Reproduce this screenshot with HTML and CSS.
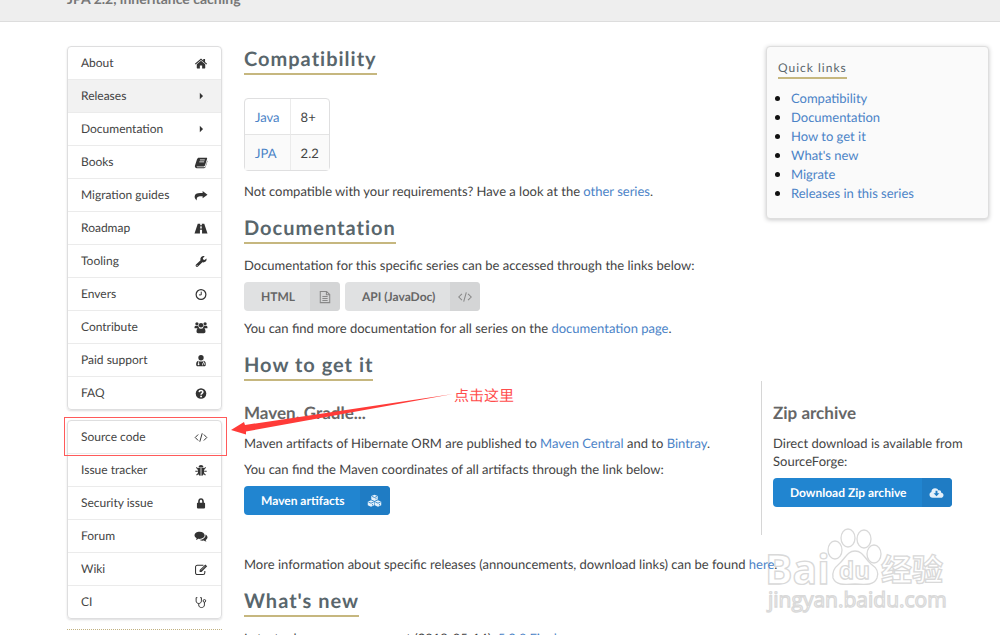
FILE: index.html
```
<!DOCTYPE html>
<html lang="en">
<head>
  <meta charset="UTF-8">
  <meta name="viewport" content="width=device-width, initial-scale=1.0">
  <title>Hibernate ORM 5.3 series</title>
  <link rel="stylesheet" href="styles.css">
</head>
<body>
  <svg class="sprite" aria-hidden="true">
    <symbol id="i-home" viewBox="0 0 16 16"><path d="M8 4.6 13.2 9v4.5a.6.6 0 0 1-.6.5H9.4v-3.6H6.6V14H3.4a.6.6 0 0 1-.6-.5V9zM8 1.8l2.8 2.4V2.6h2.2V6L15.5 8.200l-.9 1L8 3.700 1.400 9.200l-.9-1z"/></symbol>
    <symbol id="i-caret" viewBox="0 0 16 16"><path d="M6.500 3.500v8l4-4z"/></symbol>
    <symbol id="i-book" viewBox="0 0 16 16"><path d="M5.500 2h9c.9 0 1.300.6 1 1.400l-2.600 8.400c-.2.7-.7 1-1.400 1H3.600c-1 0-1.400.8-.2 1h8.900c.6 0 1-.3 1.200-.9l2.300-7.300c.3.400.2.800.1 1.200l-2.200 6.800c-.3.900-1 1.400-1.900 1.400H3C1 15 0 13.300.6 11.700L3.100 4C3.500 2.800 4.200 2 5.500 2z"/><path d="m6.700 4.800h6M5.900 7.200h6" stroke="#fff" fill="none"/></symbol>
    <symbol id="i-share" viewBox="0 0 16 16"><path d="M10 2.500 16 7l-6 4.500V9H7.500C4.500 9 2.600 10 2.700 14 .6 12.500 0 10.800.2 9 .5 6.200 3 5 7 5h3z"/></symbol>
    <symbol id="i-road" viewBox="0 0 16 16"><path d="M4 2h3v2h2V2h3l4 12H9.300V9.500H6.700V14H0zM7.200 5.200 7 8h2l-.2-2.800z" fill-rule="evenodd"/></symbol>
    <symbol id="i-wrench" viewBox="0 0 16 16"><path d="M14.700 4.200c.4 1.400 0 2.900-1.100 3.900-1.100 1-2.500 1.200-3.900.8l-5.400 5.300c-.7.700-1.700.7-2.400 0s-.7-1.700 0-2.400l5.500-5.400C7 5 7.300 3.600 8.300 2.600 9.400 1.400 11 1.100 12.500 1.600L10.200 3.900l.5 1.700 1.700.5zM3.100 12.300a.6.6 0 1 0 .1 1.200.6.6 0 0 0-.1-1.200z" fill-rule="evenodd"/></symbol>
    <symbol id="i-clock" viewBox="0 0 16 16"><circle cx="8" cy="8" r="6" fill="none" stroke="currentColor" stroke-width="1.500"/><path d="M8.300 4.500v4H5.500" fill="none" stroke="currentColor" stroke-width="1.200"/></symbol>
    <symbol id="i-users" viewBox="0 0 16 16"><circle cx="3" cy="3.400" r="2"/><circle cx="13" cy="3.400" r="2"/><circle cx="8" cy="5.200" r="2.800"/><path d="M0 8.500C0 6.500.6 5.700 1.500 5.800L3 6.300l1.500-.4C4.800 7 5.200 7.700 5.700 8.200L4.200 9H1C.3 9 0 8.800 0 8.500zM16 8.500c0-2-.6-2.800-1.500-2.700l-1.500.5-1.500-.4c-.3 1.100-.7 1.800-1.200 2.300l1.500.8H15c.7 0 1-.2 1-.5zM5.200 8.700C3.500 8.700 2.500 10 2.500 13c0 1.300.8 2 2 2h7c1.200 0 2-.7 2-2 0-3-1-4.300-2.700-4.300-1.700 1.100-3.900 1.100-5.600 0z"/></symbol>
    <symbol id="i-doctor" viewBox="0 0 16 16"><circle cx="8" cy="4.600" r="3.300"/><path d="M4.600 8.200C3 8.600 2 10 2 12.800 2 14 2.800 15 4 15h8c1.200 0 2-1 2-2.200 0-2.800-1-4.200-2.600-4.600-2 1.500-4.800 1.500-6.800 0z"/><path d="M5 9v3m5 2v-2c0-1.500 2.600-1.500 2.600 0v1.500M11.200 9v2" fill="none" stroke="#fff" stroke-width="1"/><circle cx="5" cy="12.600" r="1.100" fill="#fff"/></symbol>
    <symbol id="i-help" viewBox="0 0 16 16"><circle cx="8" cy="8" r="6.500"/><path d="M5.700 6.300C5.800 3.700 10.300 3.600 10.300 6.200c0 1.700-2.200 1.700-2.200 3.400" fill="none" stroke="#fff" stroke-width="1.900"/><path d="M7 10.800h2.200v1.900H7z" fill="#fff"/></symbol>
    <symbol id="i-code" viewBox="0 0 16 16"><path d="M4.500 4.300.9 8l3.600 3.700M11.500 4.300 15.100 8l-3.600 3.700M9.500 2.800l-3 10.400" fill="none" stroke="currentColor" stroke-width="1.200"/></symbol>
    <symbol id="i-bug" viewBox="0 0 16 16"><path d="M5 4.300C5 .4 11 .4 11 4.300zM4.200 5h3.300v9.500C5 14.200 4.200 12 4.200 10zM8.500 5h3.300v5c0 2-.8 4.200-3.300 4.500z"/><path d="M4.500 6.500 2.300 4.300M4 9H1M4.700 11.500l-2.200 2.300M11.500 6.500l2.200-2.200M12 9h3M11.300 11.500l2.200 2.300" fill="none" stroke="currentColor" stroke-width="1.300"/></symbol>
    <symbol id="i-lock" viewBox="0 0 16 16"><path d="M4.500 7V5.500C4.500 3 6 1.500 8 1.500S11.500 3 11.500 5.500V7h.6c.5 0 .9.4.9.900V13c0 .6-.4 1-.9 1H3.900c-.5 0-.9-.4-.9-1V7.900c0-.5.4-.9.9-.9zm2 0h3V5.500c0-1.300-.6-2-1.500-2s-1.500.7-1.500 2z" fill-rule="evenodd"/></symbol>
    <symbol id="i-chat" viewBox="0 0 16 16"><path d="M6.300 2C9.800 2 12.500 4 12.500 6.500S9.800 11 6.300 11c-.5 0-1 0-1.500-.1-1 .8-2 1.200-3.300 1.300.7-.7 1-1.300 1.100-2.200C1 9.200 0 8 0 6.500 0 4 2.800 2 6.300 2z"/><path d="M13.500 5.500C15 6.300 16 7.500 16 9c0 1.300-.9 2.500-2.300 3.300.1.800.5 1.400 1.100 2-1.300-.1-2.400-.5-3.300-1.300-2 .3-4 0-5.400-1 4.400 0 7.900-2.500 7.400-6.500z"/></symbol>
    <symbol id="i-edit" viewBox="0 0 16 16"><path d="M11 2.700H3.500A2.200 2.200 0 0 0 1.300 5v7a2.200 2.200 0 0 0 2.200 2.200h7A2.200 2.200 0 0 0 12.700 12V9.700" fill="none" stroke="currentColor" stroke-width="1.300"/><path d="m13.300 1.700 2.300 2.300-7 7H6.300V8.700z"/><path d="m8 9 5-5" stroke="#fff" stroke-width=".6"/></symbol>
    <symbol id="i-steth" viewBox="0 0 16 16"><path d="M3.500 2H2v4c0 2 1.300 3.200 3.200 3.200S8.500 8 8.500 6V2H7M5.200 9.200V11c0 2 1.300 3.200 3.400 3.200S12.200 13 12.200 11V7.500" fill="none" stroke="currentColor" stroke-width="1.200"/><circle cx="12.200" cy="6" r="1.600" fill="none" stroke="currentColor" stroke-width="1.200"/></symbol>
    <symbol id="i-file" viewBox="0 0 16 16"><path d="M2.600 1.600h7.200l3.600 3.600v9.200H2.600zM9.600 1.600v3.800h3.800M5 7.500h6M5 9.700h6M5 11.900h6" fill="none" stroke="currentColor" stroke-width="1.200"/></symbol>
    <symbol id="i-cubes" viewBox="0 0 16 16"><path d="M8 .8 11.700 2.300v4L8 8 4.300 6.300v-4zM4 7.200 7.700 8.800v4L4 14.600.3 12.800v-4zM12 7.200l3.700 1.600v4L12 14.600l-3.700-1.800v-4z"/><path d="M5 2.700 8 4l3-1.300M9.700 6V4.500M1 9.200l3 1.300 3-1.300M9 9.200l3 1.300 3-1.300M5.700 13v-1.500M13.700 13v-1.500" fill="none" stroke="#1f7cc4" stroke-width=".9"/></symbol>
    <symbol id="i-cloud" viewBox="0 0 16 16"><path d="M3.700 13.500C1.600 13.500 0 12 0 10c0-1.500.8-2.700 2.200-3.200C2 4.300 4 2.500 6.300 2.500c1.900 0 3.300 1 4 2.600 1.700-.6 3.200.6 2.900 2.300C15 7.800 16 9 16 10.500c0 1.700-1.300 3-3 3zM6.900 5.500V8.200H4.700L8 11.600l3.300-3.400H9.100V5.500z" fill-rule="evenodd"/></symbol>
  </svg>

  <header class="banner">
    <p>JPA 2.2, inheritance caching</p>
  </header>

  <div class="page">
    <aside class="sidebar">
      <nav class="menu">
        <a href="#">About <svg><use href="#i-home"/></svg></a>
        <a href="#" class="active">Releases <svg><use href="#i-caret"/></svg></a>
        <a href="#">Documentation <svg><use href="#i-caret"/></svg></a>
        <a href="#">Books <svg><use href="#i-book"/></svg></a>
        <a href="#">Migration guides <svg><use href="#i-share"/></svg></a>
        <a href="#">Roadmap <svg><use href="#i-road"/></svg></a>
        <a href="#">Tooling <svg><use href="#i-wrench"/></svg></a>
        <a href="#">Envers <svg><use href="#i-clock"/></svg></a>
        <a href="#">Contribute <svg><use href="#i-users"/></svg></a>
        <a href="#">Paid support <svg><use href="#i-doctor"/></svg></a>
        <a href="#">FAQ <svg><use href="#i-help"/></svg></a>
      </nav>
      <nav class="menu">
        <a href="#" class="marked">Source code <svg><use href="#i-code"/></svg></a>
        <a href="#">Issue tracker <svg><use href="#i-bug"/></svg></a>
        <a href="#">Security issue <svg><use href="#i-lock"/></svg></a>
        <a href="#">Forum <svg><use href="#i-chat"/></svg></a>
        <a href="#">Wiki <svg><use href="#i-edit"/></svg></a>
        <a href="#">CI <svg><use href="#i-steth"/></svg></a>
      </nav>
      <hr>
    </aside>

    <main>
      <div class="intro">
        <div class="intro-text">
          <h2 id="compatibility">Compatibility</h2>
          <table class="compat">
            <tr><td><a href="#">Java</a></td><td>8+</td></tr>
            <tr><td><a href="#">JPA</a></td><td>2.2</td></tr>
          </table>
          <p>Not compatible with your requirements? Have a look at the <a href="#">other series</a>.</p>

          <h2 id="documentation">Documentation</h2>
          <p>Documentation for this specific series can be accessed through the links below:</p>
          <div class="buttons">
            <button type="button" class="btn"><span>HTML</span><i><svg><use href="#i-file"/></svg></i></button>
            <button type="button" class="btn"><span>API (JavaDoc)</span><i><svg><use href="#i-code"/></svg></i></button>
          </div>
          <p>You can find more documentation for all series on the <a href="#">documentation page</a>.</p>
        </div>

        <aside class="quick-links">
          <h4>Quick links</h4>
          <ul>
            <li><a href="#compatibility">Compatibility</a></li>
            <li><a href="#documentation">Documentation</a></li>
            <li><a href="#get-it">How to get it</a></li>
            <li><a href="#whats-new">What's new</a></li>
            <li><a href="#">Migrate</a></li>
            <li><a href="#">Releases in this series</a></li>
          </ul>
        </aside>
      </div>

      <h2 id="get-it">How to get it</h2>
      <div class="columns">
        <section>
          <h3>Maven, Gradle...</h3>
          <p>Maven artifacts of Hibernate ORM are published to <a href="#">Maven Central</a> and to <a href="#">Bintray</a>.</p>
          <p>You can find the Maven coordinates of all artifacts through the link below:</p>
          <button type="button" class="btn primary"><span>Maven artifacts</span><i><svg><use href="#i-cubes"/></svg></i></button>
        </section>
        <section>
          <h3>Zip archive</h3>
          <p>Direct download is available from SourceForge:</p>
          <button type="button" class="btn primary"><span>Download Zip archive</span><i><svg><use href="#i-cloud"/></svg></i></button>
        </section>
      </div>
      <p>More information about specific releases (announcements, download links) can be found <a href="#">here</a>.</p>

      <h2 id="whats-new">What's new</h2>
      <p>Latest release announcement (2018-05-14): <a href="#">5.3.0.Final</a>.</p>
    </main>
  </div>

  <!-- click hint drawn over the page -->
  <svg class="arrow" viewBox="0 0 224 44" aria-hidden="true">
    <path d="M1 38 14 30l1 3L223 2 16 39.500l0 3z" fill="#ff3b38"/>
  </svg>
  <div class="hint" lang="zh">点击这里</div>

  <svg class="watermark" viewBox="0 0 190 95" role="img" aria-label="Baidu">
    <g fill="#fff" stroke="#d9d9d9" stroke-width="1.300">
      <text class="wm-logo" x="5" y="64">Bai</text>
      <ellipse cx="75" cy="30" rx="7" ry="9"/>
      <ellipse cx="88" cy="18" rx="7" ry="9"/>
      <ellipse cx="104" cy="19" rx="7" ry="9"/>
      <ellipse cx="114" cy="34" rx="7" ry="9"/>
      <path d="M95 31c8 0 10 8 16 13 6 4 8 9 6 14-3 7-10 7-22 6-12 1-19 1-22-6-1-5 1-10 6-14 6-5 8-13 16-13z"/>
      <text class="wm-du" x="79" y="59">du</text>
      <text class="wm-cn" x="121" y="61">经验</text>
      <text class="wm-url" x="8" y="87">jingyan.baidu.com</text>
    </g>
  </svg>
</body>
</html>
```

FILE: styles.css
```
* { margin: 0; padding: 0; box-sizing: border-box; }
body {
  position: relative;
  font-family: Lato, "Noto Sans CJK SC", sans-serif;
  font-size: 13px;
  line-height: 18px;
  text-rendering: geometricPrecision;
  color: #444;
  background: #fff;
  overflow-x: hidden;
}
a { color: #4b83c7; text-decoration: none; }
.sprite { display: none; }

.banner {
  display: flex;
  align-items: flex-end;
  height: 22px;
  padding: 0 67px 13px;
  background: #eee;
  border-bottom: 1px solid #ddd;
  overflow: hidden;
  font-size: 14px;
  font-weight: bold;
  color: #777;
}

.page {
  display: grid;
  grid-template-columns: 155px 1fr;
  gap: 22px;
  padding: 24px 11px 0 67px;
}

/* sidebar */
.menu {
  margin-bottom: 10px;
  border: 1px solid #dededf;
  border-radius: 4px;
  box-shadow: 0 1px 2px rgba(34, 36, 38, 0.15);
}
.menu a {
  display: flex;
  justify-content: space-between;
  align-items: center;
  padding: 7px 13px;
  font-size: 12px;
  color: #444;
}
.menu a + a { border-top: 1px solid #ebebeb; }
.menu a.active { background: #f2f2f2; }
.menu svg { width: 14px; height: 13px; fill: currentColor; color: #333; }
.menu a.marked { position: relative; }
.menu a.marked::after {
  content: "";
  position: absolute;
  inset: -4px -6px -3px -4px;
  border: 1px solid #ff5a5a;
}
.sidebar hr { border: 0; border-top: 1px dotted #c2b280; }

/* content */
h2 {
  width: fit-content;
  margin-bottom: 12px;
  padding-bottom: 1px;
  border-bottom: 2px solid #c6b77f;
  font-size: 20px;
  line-height: 26px;
  letter-spacing: 1px;
  color: #59666c;
}
h3 { margin-bottom: 10px; font-size: 17px; line-height: 22px; color: #666; }
p + h2 { margin-top: 15px; }
p + p { margin-top: 8px; }
.intro { display: flex; align-items: flex-start; margin-bottom: 15px; }
.intro-text { flex: 1; }

.compat {
  margin: 23px 0 11px;
  border: 1px solid #dfdfe0;
  border-radius: 4px;
  border-spacing: 0;
}
.compat td { height: 35px; padding: 0 10px; }
.compat td + td { border-left: 1px solid #ebebeb; }
.compat tr + tr td { height: 36px; border-top: 1px solid #e4e4e4; background: #fafafa; }

.buttons { display: flex; gap: 5px; margin: 8px 0; }
.btn {
  display: inline-flex;
  height: 29px;
  border: 0;
  border-radius: 4px;
  overflow: hidden;
  background: #e0e1e2;
  color: #666;
  font: bold 12px/29px Lato, sans-serif;
  text-rendering: inherit;
  cursor: pointer;
}
.btn span { padding: 0 15px 0 17px; }
.btn i {
  display: flex;
  align-items: center;
  justify-content: center;
  width: 30px;
  height: 29px;
  background: #d4d5d6;
}
.btn svg { width: 14px; height: 14px; fill: currentColor; color: #888; }
.primary { margin-top: 8px; background: #2185d0; color: #fff; }
.primary i { background: #1f7cc4; }
.primary svg { width: 15px; color: #e4f0fa; }

.quick-links {
  width: 223px;
  padding: 11px 11px 15px;
  border: 1px solid #dedede;
  border-radius: 4px;
  background: #fafafa;
  box-shadow: 0 1px 4px rgba(34, 36, 38, 0.25);
}
.quick-links h4 {
  width: fit-content;
  margin-bottom: 10px;
  border-bottom: 2px solid #c6b77f;
  font-size: 12px;
  font-weight: normal;
  line-height: 19px;
  letter-spacing: 1px;
  color: #59666c;
}
.quick-links ul { padding-left: 13px; line-height: 19px; }
.quick-links li::marker { color: #111; font-size: 15px; }

.columns { display: grid; grid-template-columns: 1fr 228px; margin: -12px 0 20px; }
.columns section { padding: 21px 0 20px; }
.columns section + section { padding-left: 11px; padding-right: 12px; border-left: 1px solid #d6d6d6; }

/* overlays */
.arrow { position: absolute; left: 230px; top: 392px; width: 224px; height: 44px; }
.hint { position: absolute; left: 454px; top: 387px; font-size: 15px; color: #ff4d4d; }
.watermark { position: absolute; z-index: -1; left: 760px; top: 520px; width: 190px; height: 95px; }
.watermark text { font-family: "Open Sans", "Noto Sans CJK SC", sans-serif; }
.wm-logo { font-size: 41px; font-weight: bold; }
.wm-du { font-size: 24px; font-weight: bold; }
.watermark .wm-cn { font-family: "Noto Sans CJK SC", sans-serif; font-size: 31px; font-weight: bold; }
.wm-url { font-size: 21px; }
```
